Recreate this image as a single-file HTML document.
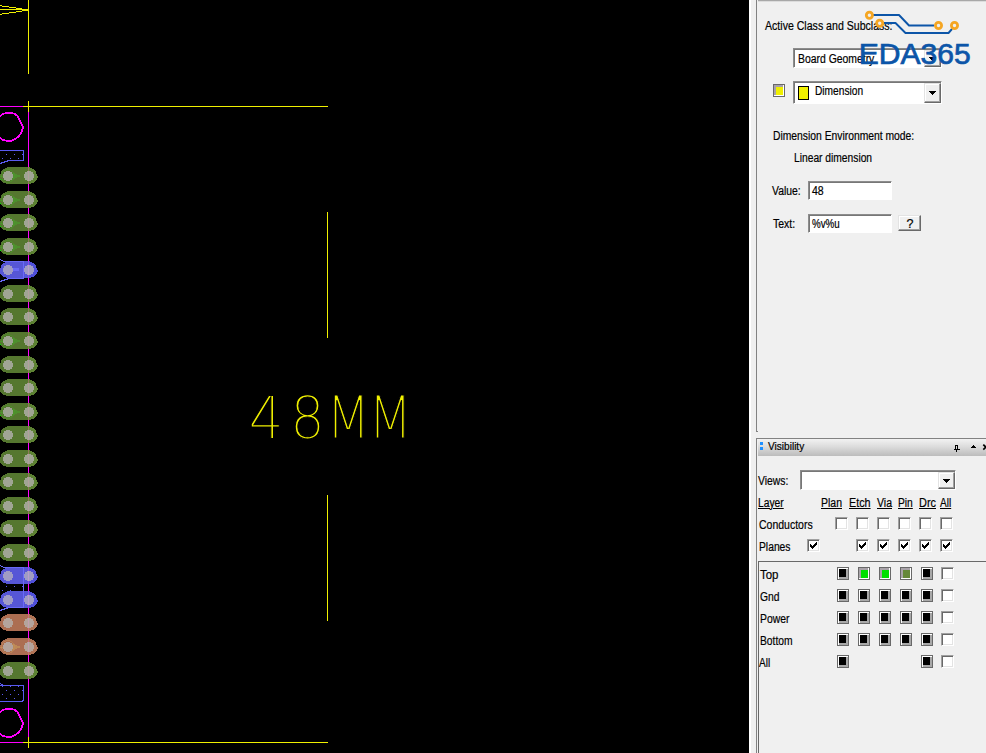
<!DOCTYPE html>
<html lang="en"><head><meta charset="utf-8"><title>Allegro PCB - Dimension</title>
<style>
html,body{margin:0;padding:0}
body{width:986px;height:753px;overflow:hidden;background:#f0f0f0;position:relative;font-family:"Liberation Sans",sans-serif}
.cv{position:absolute;left:0;top:0;background:#000}
.dim{position:absolute;left:0;top:0}
.t{position:absolute;font:12.5px/16px "Liberation Sans",sans-serif;color:#000;white-space:nowrap;transform-origin:0 0;-webkit-text-stroke:0.2px #000}
.u{text-decoration:underline;text-underline-offset:1px}
.abs{position:absolute}
.sunk{position:absolute;background:#fff;box-sizing:border-box;border:1px solid;border-color:#8c8c8c #fff #fff #8c8c8c;box-shadow:inset 1px 1px 0 #777}
.btn{position:absolute;background:#f0f0f0;box-sizing:border-box;border:1px solid;border-color:#e3e3e3 #696969 #696969 #e3e3e3;box-shadow:inset -1px -1px 0 #a0a0a0,inset 1px 1px 0 #fff}
.arw{position:absolute;display:block}
.bx{position:absolute;width:12px;height:13px;box-sizing:border-box;border:1px solid #696969;display:block}
.bx b{position:absolute;display:block;width:7px;height:8px}
.bx.r{background:#a8a8a8;box-shadow:inset 1px 1px 0 #fff}
.bx.r b{left:1px;top:1px;box-shadow:-1px -1px 0 #fff, -1px 0 0 #fff, 0 -1px 0 #fff}
.bx.s{background:#a9a3a9;box-shadow:inset -1px -1px 0 #fff}
.bx.s b{left:2px;top:2px}
.cb{position:absolute;display:block;width:13px;height:13px;box-sizing:border-box;background:#fff;border:1px solid;border-color:#a0a0a0 #fff #fff #a0a0a0;box-shadow:inset 1px 1px 0 #696969, inset -1px -1px 0 #e3e3e3}
.cb svg{position:absolute;left:-1px;top:-1px}
</style></head><body>
<svg class="cv" width="749" height="753" viewBox="0 0 749 753" shape-rendering="crispEdges">
<rect x="28" y="0" width="1" height="74" fill="#f0f000"/>
<path fill="#f0f000" d="M0 5h2v1h-2z M2 6h7v1h-7z M9 7h7v1h-7z M16 8h6v1h-6z M0 9h28v1h-28z M22 10h6v1h-6z M16 11h6v1h-6z M9 12h7v1h-7z M2 13h7v1h-7z M0 14h2v1h-2z"/>
<rect x="0" y="106" width="23" height="1" fill="#ff00ff"/>
<rect x="23" y="106" width="305" height="1" fill="#f0f000"/>
<rect x="0" y="742" width="23" height="1" fill="#ff00ff"/>
<rect x="23" y="742" width="305" height="1" fill="#f0f000"/>
<rect x="28" y="112" width="1" height="625" fill="#ff00ff"/>
<rect x="28" y="101" width="1" height="11" fill="#f0f000"/>
<rect x="28" y="737" width="1" height="11" fill="#f0f000"/>
<path d="M-1 117 Q2.5 113.6 6 113 L12 113 Q15.5 113.6 17.6 116.2 L23 127.3 Q22.6 132 19.2 135.8 Q15.8 139.6 12 140.6 L6 140.6 Q2.5 140.2 -1 137.4" fill="none" stroke="#ff00ff" stroke-width="1.8"/>
<path d="M-1 117 Q2.5 113.6 6 113 L12 113 Q15.5 113.6 17.6 116.2 L23 127.3 Q22.6 132 19.2 135.8 Q15.8 139.6 12 140.6 L6 140.6 Q2.5 140.2 -1 137.4" fill="none" stroke="#ff00ff" stroke-width="1.8" transform="translate(0,596)"/>
<g stroke="#5a5af0" stroke-width="1" fill="none">
<path d="M0 150.5 H23.5 V160.5 H9 L0 163.5"/>
<path d="M0 685.5 H23.5 V700 L22 701.5 H0 M0 683.5 L4 685.5"/>
</g>
<g fill="#5a5af0"><rect x="6" y="154" width="1" height="1"/><rect x="14" y="154" width="1" height="1"/><rect x="22" y="154" width="1" height="1"/><rect x="2" y="158" width="1" height="1"/><rect x="10" y="158" width="1" height="1"/><rect x="18" y="158" width="1" height="1"/><rect x="2" y="686" width="1" height="1"/><rect x="10" y="686" width="1" height="1"/><rect x="18" y="686" width="1" height="1"/><rect x="6" y="690" width="1" height="1"/><rect x="14" y="690" width="1" height="1"/><rect x="22" y="690" width="1" height="1"/><rect x="2" y="694" width="1" height="1"/><rect x="10" y="694" width="1" height="1"/><rect x="18" y="694" width="1" height="1"/><rect x="6" y="698" width="1" height="1"/><rect x="14" y="698" width="1" height="1"/><rect x="6" y="586" width="1" height="1"/><rect x="14" y="586" width="1" height="1"/><rect x="22" y="586" width="1" height="1"/><rect x="2" y="590" width="1" height="1"/><rect x="10" y="590" width="1" height="1"/></g>
<defs><path id="pad" d="M7 0h23v1h-23z M5 1h27v1h-27z M3 2h31v1h-31z M2 3h33v1h-33z M1 4h35v1h-35z M1 5h35v1h-35z M1 6h35v1h-35z M0 7h37v1h-37z M0 8h37v1h-37z M0 9h38v1h-38z M0 10h38v1h-38z M0 11h37v1h-37z M0 12h37v1h-37z M1 13h35v1h-35z M2 14h33v1h-33z M3 15h31v1h-31z M6 16h25v1h-25z"/><path id="padr" d="M29 0h1v1h-1z M29 1h3v1h-3z M29 2h5v1h-5z M29 3h6v1h-6z M29 4h7v1h-7z M29 5h7v1h-7z M29 6h7v1h-7z M29 7h8v1h-8z M29 8h8v1h-8z M29 9h9v1h-9z M29 10h9v1h-9z M29 11h8v1h-8z M29 12h8v1h-8z M29 13h7v1h-7z M29 14h6v1h-6z M29 15h5v1h-5z M29 16h2v1h-2z"/></defs>
<use href="#pad" y="167" fill="#55772f"/><use href="#padr" y="167" fill="#5d8233"/>
<path d="M0 175.5 H4 V176.5 H0Z M12 172.5 L19.5 175.5 V176.5 L12 179.5Z" fill="#4c9a2c" opacity="0.7"/>
<circle cx="8" cy="176" r="6.3" fill="none" stroke="#4c9a2c" stroke-width="1" opacity="0.5"/>
<circle cx="8" cy="176" r="5.05" fill="#a0a594"/>
<circle cx="29" cy="176" r="5.05" fill="#a0a594"/>
<rect x="0" y="179" width="1" height="1" fill="#00e000"/>
<use href="#pad" y="191" fill="#55772f"/><use href="#padr" y="191" fill="#5d8233"/>
<path d="M0 199.5 H4 V200.5 H0Z M12 196.5 L19.5 199.5 V200.5 L12 203.5Z" fill="#4c9a2c" opacity="0.7"/>
<circle cx="8" cy="200" r="6.3" fill="none" stroke="#4c9a2c" stroke-width="1" opacity="0.5"/>
<circle cx="8" cy="200" r="5.05" fill="#a0a594"/>
<circle cx="29" cy="200" r="5.05" fill="#a0a594"/>
<rect x="0" y="203" width="1" height="1" fill="#00e000"/>
<use href="#pad" y="214" fill="#55772f"/><use href="#padr" y="214" fill="#5d8233"/>
<path d="M0 222.5 H4 V223.5 H0Z M12 219.5 L19.5 222.5 V223.5 L12 226.5Z" fill="#4c9a2c" opacity="0.7"/>
<circle cx="8" cy="223" r="6.3" fill="none" stroke="#4c9a2c" stroke-width="1" opacity="0.5"/>
<circle cx="8" cy="223" r="5.05" fill="#a0a594"/>
<circle cx="29" cy="223" r="5.05" fill="#a0a594"/>
<rect x="0" y="226" width="1" height="1" fill="#00e000"/>
<use href="#pad" y="238" fill="#55772f"/><use href="#padr" y="238" fill="#5d8233"/>
<path d="M0 246.5 H4 V247.5 H0Z M12 243.5 L19.5 246.5 V247.5 L12 250.5Z" fill="#4c9a2c" opacity="0.7"/>
<circle cx="8" cy="247" r="6.3" fill="none" stroke="#4c9a2c" stroke-width="1" opacity="0.5"/>
<circle cx="8" cy="247" r="5.05" fill="#a0a594"/>
<circle cx="29" cy="247" r="5.05" fill="#a0a594"/>
<rect x="0" y="250" width="1" height="1" fill="#00e000"/>
<use href="#pad" y="261" fill="#5656d6"/><use href="#padr" y="261" fill="#5050d8"/>
<rect x="12" y="268" width="7" height="3" fill="#6a6af4"/>
<circle cx="8" cy="270" r="5.05" fill="#a09cc4"/>
<circle cx="29" cy="270" r="5.05" fill="#a09cc4"/>
<use href="#pad" y="285" fill="#55772f"/><use href="#padr" y="285" fill="#5d8233"/>
<circle cx="8" cy="294" r="5.05" fill="#a0a594"/>
<circle cx="29" cy="294" r="5.05" fill="#a0a594"/>
<use href="#pad" y="308" fill="#55772f"/><use href="#padr" y="308" fill="#5d8233"/>
<circle cx="8" cy="317" r="5.05" fill="#a0a594"/>
<circle cx="29" cy="317" r="5.05" fill="#a0a594"/>
<use href="#pad" y="332" fill="#55772f"/><use href="#padr" y="332" fill="#5d8233"/>
<path d="M0 340.5 H4 V341.5 H0Z M12 337.5 L19.5 340.5 V341.5 L12 344.5Z" fill="#4c9a2c" opacity="0.7"/>
<circle cx="8" cy="341" r="6.3" fill="none" stroke="#4c9a2c" stroke-width="1" opacity="0.5"/>
<circle cx="8" cy="341" r="5.05" fill="#a0a594"/>
<circle cx="29" cy="341" r="5.05" fill="#a0a594"/>
<rect x="0" y="344" width="1" height="1" fill="#00e000"/>
<use href="#pad" y="356" fill="#55772f"/><use href="#padr" y="356" fill="#5d8233"/>
<circle cx="8" cy="365" r="5.05" fill="#a0a594"/>
<circle cx="29" cy="365" r="5.05" fill="#a0a594"/>
<use href="#pad" y="379" fill="#55772f"/><use href="#padr" y="379" fill="#5d8233"/>
<circle cx="8" cy="388" r="5.05" fill="#a0a594"/>
<circle cx="29" cy="388" r="5.05" fill="#a0a594"/>
<use href="#pad" y="403" fill="#55772f"/><use href="#padr" y="403" fill="#5d8233"/>
<path d="M0 411.5 H4 V412.5 H0Z M12 408.5 L19.5 411.5 V412.5 L12 415.5Z" fill="#4c9a2c" opacity="0.7"/>
<circle cx="8" cy="412" r="6.3" fill="none" stroke="#4c9a2c" stroke-width="1" opacity="0.5"/>
<circle cx="8" cy="412" r="5.05" fill="#a0a594"/>
<circle cx="29" cy="412" r="5.05" fill="#a0a594"/>
<rect x="0" y="415" width="1" height="1" fill="#00e000"/>
<use href="#pad" y="426" fill="#55772f"/><use href="#padr" y="426" fill="#5d8233"/>
<circle cx="8" cy="435" r="5.05" fill="#a0a594"/>
<circle cx="29" cy="435" r="5.05" fill="#a0a594"/>
<use href="#pad" y="450" fill="#55772f"/><use href="#padr" y="450" fill="#5d8233"/>
<circle cx="8" cy="459" r="5.05" fill="#a0a594"/>
<circle cx="29" cy="459" r="5.05" fill="#a0a594"/>
<use href="#pad" y="473" fill="#55772f"/><use href="#padr" y="473" fill="#5d8233"/>
<circle cx="8" cy="482" r="5.05" fill="#a0a594"/>
<circle cx="29" cy="482" r="5.05" fill="#a0a594"/>
<use href="#pad" y="497" fill="#55772f"/><use href="#padr" y="497" fill="#5d8233"/>
<circle cx="8" cy="506" r="5.05" fill="#a0a594"/>
<circle cx="29" cy="506" r="5.05" fill="#a0a594"/>
<use href="#pad" y="520" fill="#55772f"/><use href="#padr" y="520" fill="#5d8233"/>
<circle cx="8" cy="529" r="5.05" fill="#a0a594"/>
<circle cx="29" cy="529" r="5.05" fill="#a0a594"/>
<use href="#pad" y="544" fill="#55772f"/><use href="#padr" y="544" fill="#5d8233"/>
<circle cx="8" cy="553" r="5.05" fill="#a0a594"/>
<circle cx="29" cy="553" r="5.05" fill="#a0a594"/>
<use href="#pad" y="567" fill="#5656d6"/><use href="#padr" y="567" fill="#5050d8"/>
<circle cx="8" cy="576" r="5.05" fill="#a09cc4"/>
<circle cx="29" cy="576" r="5.05" fill="#a09cc4"/>
<use href="#pad" y="591" fill="#5656d6"/><use href="#padr" y="591" fill="#5050d8"/>
<circle cx="8" cy="600" r="5.05" fill="#a09cc4"/>
<circle cx="29" cy="600" r="5.05" fill="#a09cc4"/>
<use href="#pad" y="614" fill="#ac6e52"/><use href="#padr" y="614" fill="#b07456"/>
<circle cx="8" cy="623" r="5.05" fill="#b4a49c"/>
<circle cx="29" cy="623" r="5.05" fill="#b4a49c"/>
<use href="#pad" y="638" fill="#ac6e52"/><use href="#padr" y="638" fill="#b07456"/>
<path d="M0 646.5 H4 V647.5 H0Z M12 643.5 L19.5 646.5 V647.5 L12 650.5Z" fill="#c49458" opacity="0.7"/>
<circle cx="8" cy="647" r="6.3" fill="none" stroke="#c49458" stroke-width="1" opacity="0.5"/>
<circle cx="8" cy="647" r="5.05" fill="#b4a49c"/>
<circle cx="29" cy="647" r="5.05" fill="#b4a49c"/>
<use href="#pad" y="662" fill="#55772f"/><use href="#padr" y="662" fill="#5d8233"/>
<circle cx="8" cy="671" r="5.05" fill="#a0a594"/>
<circle cx="29" cy="671" r="5.05" fill="#a0a594"/>
<rect x="28" y="167" width="1" height="17" fill="#8e7a5a"/>
<rect x="28" y="171" width="1" height="10" fill="#b2a09c"/>
<rect x="28" y="191" width="1" height="17" fill="#8e7a5a"/>
<rect x="28" y="195" width="1" height="10" fill="#b2a09c"/>
<rect x="28" y="214" width="1" height="17" fill="#8e7a5a"/>
<rect x="28" y="218" width="1" height="10" fill="#b2a09c"/>
<rect x="28" y="238" width="1" height="17" fill="#8e7a5a"/>
<rect x="28" y="242" width="1" height="10" fill="#b2a09c"/>
<rect x="28" y="261" width="1" height="17" fill="#8a50e6"/>
<rect x="28" y="265" width="1" height="10" fill="#b8a0cc"/>
<rect x="28" y="285" width="1" height="17" fill="#8e7a5a"/>
<rect x="28" y="289" width="1" height="10" fill="#b2a09c"/>
<rect x="28" y="308" width="1" height="17" fill="#8e7a5a"/>
<rect x="28" y="312" width="1" height="10" fill="#b2a09c"/>
<rect x="28" y="332" width="1" height="17" fill="#8e7a5a"/>
<rect x="28" y="336" width="1" height="10" fill="#b2a09c"/>
<rect x="28" y="356" width="1" height="17" fill="#8e7a5a"/>
<rect x="28" y="360" width="1" height="10" fill="#b2a09c"/>
<rect x="28" y="379" width="1" height="17" fill="#8e7a5a"/>
<rect x="28" y="383" width="1" height="10" fill="#b2a09c"/>
<rect x="28" y="403" width="1" height="17" fill="#8e7a5a"/>
<rect x="28" y="407" width="1" height="10" fill="#b2a09c"/>
<rect x="28" y="426" width="1" height="17" fill="#8e7a5a"/>
<rect x="28" y="430" width="1" height="10" fill="#b2a09c"/>
<rect x="28" y="450" width="1" height="17" fill="#8e7a5a"/>
<rect x="28" y="454" width="1" height="10" fill="#b2a09c"/>
<rect x="28" y="473" width="1" height="17" fill="#8e7a5a"/>
<rect x="28" y="477" width="1" height="10" fill="#b2a09c"/>
<rect x="28" y="497" width="1" height="17" fill="#8e7a5a"/>
<rect x="28" y="501" width="1" height="10" fill="#b2a09c"/>
<rect x="28" y="520" width="1" height="17" fill="#8e7a5a"/>
<rect x="28" y="524" width="1" height="10" fill="#b2a09c"/>
<rect x="28" y="544" width="1" height="17" fill="#8e7a5a"/>
<rect x="28" y="548" width="1" height="10" fill="#b2a09c"/>
<rect x="28" y="567" width="1" height="17" fill="#8a50e6"/>
<rect x="28" y="571" width="1" height="10" fill="#b8a0cc"/>
<rect x="28" y="591" width="1" height="17" fill="#8a50e6"/>
<rect x="28" y="595" width="1" height="10" fill="#b8a0cc"/>
<rect x="28" y="614" width="1" height="17" fill="#cc7078"/>
<rect x="28" y="618" width="1" height="10" fill="#c4a0b0"/>
<rect x="28" y="638" width="1" height="17" fill="#cc7078"/>
<rect x="28" y="642" width="1" height="10" fill="#c4a0b0"/>
<rect x="28" y="662" width="1" height="17" fill="#8e7a5a"/>
<rect x="28" y="666" width="1" height="10" fill="#b2a09c"/>
<g stroke="#6a6af8" stroke-width="1" fill="none">
<path d="M0 259.5 L4 261.5 H23.5 V278.5 H9 L0 281.5"/>
<path d="M0 565.5 L4 567.5 H23.5 V607.5 H9 L0 610.5"/>
</g>
<rect x="327" y="212" width="1" height="126" fill="#f0f000"/>
<rect x="327" y="495" width="1" height="126" fill="#f0f000"/>
</svg>
<svg class="dim" width="749" height="753" viewBox="0 0 749 753"><text y="438" font-family="DejaVu Sans Light, DejaVu Sans, sans-serif" font-weight="200" font-size="58" fill="#f0f000" stroke="#000" stroke-width="1.2" paint-order="fill stroke"><tspan x="248.4" textLength="35.3" lengthAdjust="spacingAndGlyphs">4</tspan><tspan x="290" textLength="35" lengthAdjust="spacingAndGlyphs">8</tspan><tspan x="326" textLength="44.4" lengthAdjust="spacingAndGlyphs">M</tspan><tspan x="368" textLength="44.4" lengthAdjust="spacingAndGlyphs">M</tspan></text></svg>
<div class="abs" style="left:749px;top:0;width:2px;height:753px;background:#fff"></div>
<div class="abs" style="left:756px;top:0;width:1px;height:432px;background:#828282"></div>
<div class="abs" style="left:757px;top:431px;width:1px;height:1px;background:#828282"></div>
<div class="abs" style="left:758px;top:0;width:228px;height:1px;background:#a8a8a8"></div>
<div class="abs" style="left:758px;top:1px;width:228px;height:1px;background:#dcdcdc"></div>

<!-- Options panel -->
<div class="sunk" style="left:793px;top:48px;width:149px;height:20px"></div>
<div class="btn" style="left:924px;top:50px;width:17px;height:17px"></div><svg class="arw" style="left:929px;top:57px" width="7" height="4" viewBox="0 0 7 4" shape-rendering="crispEdges"><path d="M0 0h7v1h-7z M1 1h5v1h-5z M2 2h3v1h-3z M3 3h1v1h-1z" fill="#000"/></svg>
<i class="bx s" style="left:773px;top:84px"><b style="background:#f0f000"></b></i>
<div class="sunk" style="left:793px;top:81px;width:149px;height:23px"></div>
<div class="abs" style="left:798px;top:86px;width:11px;height:14px;box-sizing:border-box;border:1px solid #000;background:#f0f000"></div>
<div class="btn" style="left:924px;top:83px;width:17px;height:20px"></div><svg class="arw" style="left:929px;top:91px" width="7" height="4" viewBox="0 0 7 4" shape-rendering="crispEdges"><path d="M0 0h7v1h-7z M1 1h5v1h-5z M2 2h3v1h-3z M3 3h1v1h-1z" fill="#000"/></svg>
<div class="sunk" style="left:808px;top:181px;width:84px;height:19px"></div>
<div class="sunk" style="left:808px;top:214px;width:84px;height:19px"></div>
<div class="btn" style="left:898px;top:215px;width:23px;height:16px"></div>
<span class="t" style="left:906.5px;top:217px;line-height:14px">?</span>

<!-- Visibility panel -->
<div class="abs" style="left:756px;top:438px;width:230px;height:1px;background:#828282"></div>
<div class="abs" style="left:756px;top:438px;width:1px;height:315px;background:#828282"></div>
<div class="abs" style="left:758px;top:439px;width:228px;height:17px;background:linear-gradient(#f2f2f2,#dcdcdc 45%,#bcbcbc)"></div>
<div class="abs" style="left:760px;top:442px;width:3px;height:3px;background:#1e90ff"></div>
<div class="abs" style="left:760px;top:447px;width:3px;height:3px;background:#1e90ff"></div>
<span class="t" style="left:767.8px;top:438.5px;font-size:11px;line-height:14px;color:#000;transform:scaleX(0.916)">Visibility</span>
<svg class="abs" style="left:950px;top:441px" width="36" height="14" viewBox="950 441 36 14" shape-rendering="crispEdges">
<path d="M955 445h3v1h-3z M955 446h1v3h-1z M957 446h1v3h-1z M954 449h6v1h-6z M956 450h1v2h-1z" fill="#000"/>
<path d="M973 445h1v1h-1z M972 446h3v1h-3z M971 447h5v1h-5z" fill="#000"/>
<path d="M983.3 444.6 l5 5 m0 -5 l-5 5" stroke="#000" stroke-width="1.7" shape-rendering="auto"/>
</svg>
<div class="sunk" style="left:800px;top:470px;width:156px;height:20px"></div>
<div class="btn" style="left:938px;top:472px;width:17px;height:17px"></div><svg class="arw" style="left:943px;top:479px" width="7" height="4" viewBox="0 0 7 4" shape-rendering="crispEdges"><path d="M0 0h7v1h-7z M1 1h5v1h-5z M2 2h3v1h-3z M3 3h1v1h-1z" fill="#000"/></svg>
<div class="abs" style="left:758px;top:561px;width:228px;height:1px;background:#696969"></div>
<div class="abs" style="left:758px;top:561px;width:1px;height:192px;background:#696969"></div>
<i class="cb" style="left:835px;top:517px"></i>
<i class="cb" style="left:856px;top:517px"></i>
<i class="cb" style="left:877px;top:517px"></i>
<i class="cb" style="left:898px;top:517px"></i>
<i class="cb" style="left:919px;top:517px"></i>
<i class="cb" style="left:940px;top:517px"></i>
<i class="cb" style="left:807px;top:539px"><svg width="13" height="13" viewBox="0 0 13 13" shape-rendering="crispEdges"><path d="M3 5 V8 L5 10 L10 5 V2 L5 7 Z" fill="#000"/></svg></i>
<i class="cb" style="left:856px;top:539px"><svg width="13" height="13" viewBox="0 0 13 13" shape-rendering="crispEdges"><path d="M3 5 V8 L5 10 L10 5 V2 L5 7 Z" fill="#000"/></svg></i>
<i class="cb" style="left:877px;top:539px"><svg width="13" height="13" viewBox="0 0 13 13" shape-rendering="crispEdges"><path d="M3 5 V8 L5 10 L10 5 V2 L5 7 Z" fill="#000"/></svg></i>
<i class="cb" style="left:898px;top:539px"><svg width="13" height="13" viewBox="0 0 13 13" shape-rendering="crispEdges"><path d="M3 5 V8 L5 10 L10 5 V2 L5 7 Z" fill="#000"/></svg></i>
<i class="cb" style="left:919px;top:539px"><svg width="13" height="13" viewBox="0 0 13 13" shape-rendering="crispEdges"><path d="M3 5 V8 L5 10 L10 5 V2 L5 7 Z" fill="#000"/></svg></i>
<i class="cb" style="left:940px;top:539px"><svg width="13" height="13" viewBox="0 0 13 13" shape-rendering="crispEdges"><path d="M3 5 V8 L5 10 L10 5 V2 L5 7 Z" fill="#000"/></svg></i>
<i class="bx r" style="left:837px;top:567px"><b style="background:#000"></b></i>
<i class="bx s" style="left:858px;top:567px"><b style="background:#00e000"></b></i>
<i class="bx s" style="left:879px;top:567px"><b style="background:#00e000"></b></i>
<i class="bx s" style="left:900px;top:567px"><b style="background:#66883a"></b></i>
<i class="bx r" style="left:921px;top:567px"><b style="background:#000"></b></i>
<i class="cb" style="left:941px;top:567px"></i>
<i class="bx r" style="left:837px;top:589px"><b style="background:#000"></b></i>
<i class="bx r" style="left:858px;top:589px"><b style="background:#000"></b></i>
<i class="bx r" style="left:879px;top:589px"><b style="background:#000"></b></i>
<i class="bx r" style="left:900px;top:589px"><b style="background:#000"></b></i>
<i class="bx r" style="left:921px;top:589px"><b style="background:#000"></b></i>
<i class="cb" style="left:941px;top:589px"></i>
<i class="bx r" style="left:837px;top:611px"><b style="background:#000"></b></i>
<i class="bx r" style="left:858px;top:611px"><b style="background:#000"></b></i>
<i class="bx r" style="left:879px;top:611px"><b style="background:#000"></b></i>
<i class="bx r" style="left:900px;top:611px"><b style="background:#000"></b></i>
<i class="bx r" style="left:921px;top:611px"><b style="background:#000"></b></i>
<i class="cb" style="left:941px;top:611px"></i>
<i class="bx r" style="left:837px;top:633px"><b style="background:#000"></b></i>
<i class="bx r" style="left:858px;top:633px"><b style="background:#000"></b></i>
<i class="bx r" style="left:879px;top:633px"><b style="background:#000"></b></i>
<i class="bx r" style="left:900px;top:633px"><b style="background:#000"></b></i>
<i class="bx r" style="left:921px;top:633px"><b style="background:#000"></b></i>
<i class="cb" style="left:941px;top:633px"></i>
<i class="bx r" style="left:837px;top:655px"><b style="background:#000"></b></i>
<i class="bx r" style="left:921px;top:655px"><b style="background:#000"></b></i>
<i class="cb" style="left:941px;top:655px"></i>
<span class="t" style="left:765.0px;top:17.67px;transform:scaleX(0.846)">Active Class and Subclass:</span>
<span class="t" style="left:797.7px;top:50.67px;transform:scaleX(0.832)">Board Geometry</span>
<span class="t" style="left:814.9px;top:82.67px;transform:scaleX(0.814)">Dimension</span>
<span class="t" style="left:772.8px;top:127.67px;transform:scaleX(0.826)">Dimension Environment mode:</span>
<span class="t" style="left:793.8px;top:149.67px;transform:scaleX(0.820)">Linear dimension</span>
<span class="t" style="left:772.0px;top:182.67px;transform:scaleX(0.832)">Value:</span>
<span class="t" style="left:811.8px;top:182.67px;transform:scaleX(0.841)">48</span>
<span class="t" style="left:773.0px;top:215.67px;transform:scaleX(0.841)">Text:</span>
<span class="t" style="left:811.8px;top:215.67px;transform:scaleX(0.784)">%v%u</span>
<span class="t" style="left:758.3px;top:472.67px;transform:scaleX(0.828)">Views:</span>
<span class="t u" style="left:758.3px;top:494.67px;transform:scaleX(0.822)">Layer</span>
<span class="t u" style="left:821.2px;top:494.67px;transform:scaleX(0.839)">Plan</span>
<span class="t u" style="left:849.4px;top:494.67px;transform:scaleX(0.863)">Etch</span>
<span class="t u" style="left:877.1px;top:494.67px;transform:scaleX(0.841)">Via</span>
<span class="t u" style="left:898.2px;top:494.67px;transform:scaleX(0.819)">Pin</span>
<span class="t u" style="left:919.0px;top:494.67px;transform:scaleX(0.874)">Drc</span>
<span class="t u" style="left:940.0px;top:494.67px;transform:scaleX(0.805)">All</span>
<span class="t" style="left:758.5px;top:516.67px;transform:scaleX(0.840)">Conductors</span>
<span class="t" style="left:758.5px;top:538.67px;transform:scaleX(0.824)">Planes</span>
<span class="t" style="left:759.7px;top:566.67px;transform:scaleX(0.918)">Top</span>
<span class="t" style="left:759.7px;top:588.67px;transform:scaleX(0.825)">Gnd</span>
<span class="t" style="left:759.7px;top:610.67px;transform:scaleX(0.832)">Power</span>
<span class="t" style="left:759.7px;top:632.67px;transform:scaleX(0.823)">Bottom</span>
<span class="t" style="left:759.0px;top:654.67px;transform:scaleX(0.805)">All</span>
<!-- EDA365 watermark logo -->
<svg class="abs" style="left:856px;top:4px" width="124" height="70" viewBox="856 4 124 70">
<g fill="none" stroke="#0c55a8" stroke-width="1.9" stroke-linejoin="round">
<path d="M873 15 H899 L909 25.5 H934"/><path d="M884 23 H895.5 L905.5 33 H948.5 L952 29"/></g>
<g fill="#f0f0f0" stroke="#f5a623" stroke-width="2.8"><circle cx="869.4" cy="15.2" r="3.1"/><circle cx="879.7" cy="23.2" r="3.1"/><circle cx="938.5" cy="25.5" r="3.1"/><circle cx="954.5" cy="25.5" r="3.1"/></g>
<text x="858.8" y="64.4" font-family="Liberation Sans, sans-serif" font-size="28.6" fill="#0c55a8" stroke="#0c55a8" stroke-width="0.7" textLength="112" lengthAdjust="spacingAndGlyphs">EDA365</text>
</svg>
</body></html>
